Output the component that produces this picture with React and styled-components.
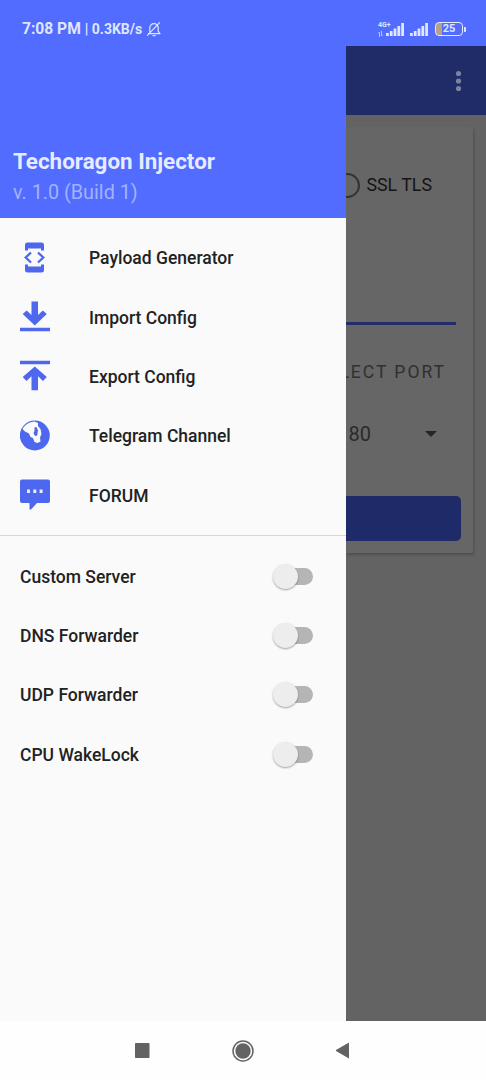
import React from "react";
import styled, { createGlobalStyle } from "styled-components";

const Global = createGlobalStyle`
  * { box-sizing: border-box; }
  body { margin: 0; background: #fff; font-family: Roboto, "Liberation Sans", sans-serif; }
  svg { display: block; flex: none; }
`;

const Screen = styled.div`
  width: 486px;
  height: 1080px;
  display: flex;
  flex-direction: column;
  overflow: hidden;
`;

const StatusBar = styled.header`
  height: 46px;
  flex: none;
  display: flex;
  align-items: center;
  justify-content: space-between;
  padding: 12px 20px 0 22px;
  background: #516cff;
  color: #dfe6ff;
`;

const StatusGroup = styled.div`
  display: flex;
  align-items: center;
  gap: ${(p) => p.$gap}px;
  height: 34px;
`;

const Clock = styled.span`
  font-size: 15.6px;
  line-height: 20px;
  font-weight: 700;
  white-space: pre;
`;

const Rate = styled(Clock)`
  font-size: 14px;
`;

const Main = styled.main`
  display: flex;
  height: 975px;
  flex: none;
`;

const Drawer = styled.nav`
  width: 346px;
  flex: none;
  background: #fafafa;
`;

const DrawerHeader = styled.div`
  height: 171.5px;
  padding: 0 13px 9px;
  display: flex;
  flex-direction: column;
  justify-content: flex-end;
  background: #516cff;
`;

const AppName = styled.h1`
  margin: 0;
  font-size: 22.4px;
  line-height: 31px;
  font-weight: 700;
  color: #e6ebff;
`;

const Version = styled.div`
  font-size: 19.8px;
  line-height: 32px;
  color: #a3b2fb;
`;

const Section = styled.div`
  padding: ${(p) => p.$pad};
  border-bottom: ${(p) => (p.$divided ? "1px solid #d6d6d6" : "none")};
`;

const Row = styled.div`
  height: 59.4px;
  display: flex;
  align-items: center;
  justify-content: ${(p) => (p.$spread ? "space-between" : "flex-start")};
  gap: 39px;
  padding: 0 33px 0 20px;
`;

const Label = styled.span`
  padding-top: 1px;
  font-size: 17.5px;
  line-height: 24px;
  font-weight: 500;
  color: #222;
`;

const Track = styled.div`
  width: 36px;
  height: 17px;
  border-radius: 9px;
  background: #b5b5b5;
  display: flex;
  align-items: center;
`;

const Thumb = styled.div`
  width: 25px;
  height: 25px;
  flex: none;
  margin-left: -4px;
  border-radius: 50%;
  background: #ededed;
  box-shadow: 0 1px 2px rgba(0, 0, 0, 0.35);
`;

const Page = styled.section`
  flex: 1;
  min-width: 0;
  overflow: hidden;
  background: #636363;
  display: flex;
  flex-direction: column;
`;

const Toolbar = styled.div`
  height: 69px;
  flex: none;
  display: flex;
  align-items: center;
  justify-content: flex-end;
  padding-right: 24px;
  background: #202c67;
`;

const Card = styled.div`
  height: 426px;
  margin: 12px 13px 0 0;
  padding-right: 12px;
  display: flex;
  flex-direction: column;
  align-items: flex-end;
  background: #666;
  border-radius: 0 2px 2px 0;
  box-shadow: 1px 2px 3px rgba(0, 0, 0, 0.22);
`;

const RadioRow = styled.div`
  height: 26px;
  margin: 45px 29px 0 0;
  display: flex;
  align-items: center;
  gap: 7px;
`;

const Radio = styled.span`
  width: 25px;
  height: 25px;
  flex: none;
  border: 2px solid #333;
  border-radius: 50%;
`;

const RadioText = styled.span`
  font-size: 17.8px;
  line-height: 24px;
  white-space: nowrap;
  color: #141414;
`;

const Underline = styled.div`
  width: 300px;
  height: 3px;
  flex: none;
  margin: 124px 5px 0 0;
  background: #222d6a;
`;

const PortTitle = styled.div`
  margin: 35px 15px 0 0;
  font-size: 17.5px;
  line-height: 24px;
  letter-spacing: 2px;
  white-space: nowrap;
  color: #303030;
`;

const PortSelect = styled.div`
  margin: 37px 24px 0 0;
  display: flex;
  align-items: center;
  gap: 54px;
  font-size: 20px;
  line-height: 26px;
  color: #2b2b2b;
`;

const StartButton = styled.div`
  width: 400px;
  height: 45px;
  flex: none;
  margin-top: 49px;
  border-radius: 5px;
  background: #1f2a69;
`;

const NavBar = styled.footer`
  flex: 1;
  display: flex;
  align-items: center;
  justify-content: center;
  gap: 82px;
  background: #fefefe;
`;

const Silent = () => (
  <svg width="16" height="16" viewBox="0 0 16 16" fill="none" stroke="#dfe6ff" strokeWidth="1.2">
    <path d="M2 12.6h12.5M3.8 12.4V6.8a4.2 4.2 0 0 1 8.4 0v3.4l1.6 2.2M1.2 14.6 13.8 1.4M6.6 14.6h3" />
  </svg>
);

const Bars = () => (
  <svg width="18" height="13" viewBox="0 0 18 13" fill="#dfe6ff">
    <rect x="0" y="10" width="2.8" height="3" />
    <rect x="3.8" y="8" width="2.8" height="5" />
    <rect x="7.6" y="5.5" width="2.8" height="7.5" />
    <rect x="11.4" y="3" width="2.8" height="10" />
    <rect x="15.2" y="0" width="2.8" height="13" />
  </svg>
);

const Network = styled.div`
  width: 13px;
  height: 17px;
  margin-right: -11px;
  display: flex;
  flex-direction: column;
  gap: 2px;
  font-size: 7px;
  line-height: 8px;
  font-weight: 700;
`;

const DataArrows = () => (
  <svg width="5" height="6" viewBox="0 0 5 6" fill="none" stroke="#b4c1ff" strokeWidth="1">
    <path d="M1.5 6V1L0 2.5M3.5 0v5L5 3.5" />
  </svg>
);

const Battery = styled.div`
  display: flex;
  align-items: center;
  gap: 1px;
  margin-left: 1px;
`;

const Cell = styled.div`
  width: 28px;
  height: 14px;
  border: 1.5px solid #e3e9ff;
  border-radius: 4px;
  background: linear-gradient(90deg, #b7a087 0 6px, transparent 6px);
  font-size: 11px;
  line-height: 12px;
  font-weight: 700;
  text-align: center;
`;

const Tip = styled.div`
  width: 2px;
  height: 5px;
  border-radius: 0 1px 1px 0;
  background: #dfe6ff;
`;

const Glyph = ({ children }) => (
  <svg width="30" height="32" viewBox="0 0 30 32" fill="#4d68ee">
    {children}
  </svg>
);

const icons = {
  payload: (
    <Glyph>
      <path d="M7.5 0.5h14A2.5 2.500 0 0 1 24 3v5.500h-3V6.500H8v2H5V3A2.500 2.500 0 0 1 7.500 0.500ZM5 22.500h3v2h13v-2h3V28a2.500 2.500 0 0 1-2.500 2.500h-14A2.500 2.500 0 0 1 5 28Z" />
      <path d="M11 10.500 5.700 15.500 11 20.500M18 10.500 23.300 15.500 18 20.500" fill="none" stroke="#4d68ee" strokeWidth="2.300" />
    </Glyph>
  ),
  download: (
    <Glyph>
      <path d="M11.500 0.500H18v13.600l4.800-4.500 4 3.500L14.800 24.600 2.700 13.100l4-3.500 4.800 4.500ZM0 26.700h30V30.200H0Z" />
    </Glyph>
  ),
  upload: (
    <Glyph>
      <path d="M0 0.700h30v3.500H0ZM14.800 6.500l12 10.600-3.800 3.800-5-4.600V30.200h-6.500V16.300l-5 4.600-3.800-3.800Z" />
    </Glyph>
  ),
  globe: (
    <Glyph>
      <circle cx="14.800" cy="15.500" r="15" />
      <path fill="#fafafa" d="M2.500 9C5 4.500 9.500 1.800 14.500 1.500L18 3v3l2.500 3 1 5-1.500 3.500.5 4-3 1.500-3-1-1.500-4-2.500-1-1.500-3.500L5 11.500Z" />
      <path d="m14.500 7.500 2-.5 1.500 3.500-.8 5-2.200.5-1.500-3 1-2Z" />
    </Glyph>
  ),
  chat: (
    <Glyph>
      <path d="M2 0.500h26a2 2 0 0 1 2 2v19.500a2 2 0 0 1-2 2H17l-6 6.500H9.500V24H2a2 2 0 0 1-2-2V2.500a2 2 0 0 1 2-2Z" />
      <path fill="#e9edff" d="M7 10.500h3v3.500H7ZM13.300 10.500h3v3.500h-3ZM19.600 10.500h3v3.500h-3Z" />
    </Glyph>
  ),
};

const links = [
  ["payload", "Payload Generator"],
  ["download", "Import Config"],
  ["upload", "Export Config"],
  ["globe", "Telegram Channel"],
  ["chat", "FORUM"],
];

const toggles = ["Custom Server", "DNS Forwarder", "UDP Forwarder", "CPU WakeLock"];

export default function App() {
  return (
    <Screen>
      <Global />
      <StatusBar>
        <StatusGroup $gap={4}>
          <Clock>7:08 PM</Clock>
          <Rate>| 0.3KB/s</Rate>
          <Silent />
        </StatusGroup>
        <StatusGroup $gap={6}>
          <Network>
            4G+
            <DataArrows />
          </Network>
          <Bars />
          <Bars />
          <Battery>
            <Cell>25</Cell>
            <Tip />
          </Battery>
        </StatusGroup>
      </StatusBar>
      <Main>
        <Drawer>
          <DrawerHeader>
            <AppName>Techoragon Injector</AppName>
            <Version>v. 1.0 (Build 1)</Version>
          </DrawerHeader>
          <Section $pad="10.5px 0 10px" $divided>
            {links.map(([icon, text]) => (
              <Row key={text}>
                {icons[icon]}
                <Label>{text}</Label>
              </Row>
            ))}
          </Section>
          <Section $pad="10.5px 0 0">
            {toggles.map((text) => (
              <Row key={text} $spread>
                <Label>{text}</Label>
                <Track>
                  <Thumb />
                </Track>
              </Row>
            ))}
          </Section>
        </Drawer>
        <Page>
          <Toolbar>
            <svg width="7" height="22" viewBox="0 0 7 22" fill="#7b81a0">
              <circle cx="3.500" cy="3.500" r="2.600" />
              <circle cx="3.500" cy="11" r="2.600" />
              <circle cx="3.500" cy="18.500" r="2.600" />
            </svg>
          </Toolbar>
          <Card>
            <RadioRow>
              <Radio />
              <RadioText>SSL TLS</RadioText>
            </RadioRow>
            <Underline />
            <PortTitle>SELECT PORT</PortTitle>
            <PortSelect>
              <span>80</span>
              <svg width="12" height="6" viewBox="0 0 12 6" fill="#252525">
                <path d="M0 0h12L6 6Z" />
              </svg>
            </PortSelect>
            <StartButton />
          </Card>
        </Page>
      </Main>
      <NavBar>
        <svg width="15" height="15" viewBox="0 0 15 15" fill="#636363">
          <rect width="14.500" height="15" rx="0.800" />
        </svg>
        <svg width="22" height="22" viewBox="0 0 22 22" fill="#636363">
          <circle cx="11" cy="11" r="10" fill="none" stroke="#636363" strokeWidth="1.500" />
          <circle cx="11" cy="11" r="7.700" />
        </svg>
        <svg width="15" height="17" viewBox="1 0 15 17" fill="#636363">
          <path d="M0.300 8.500 14 0.500v16Z" />
        </svg>
      </NavBar>
    </Screen>
  );
}
